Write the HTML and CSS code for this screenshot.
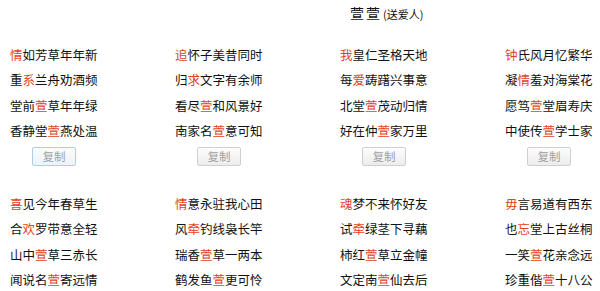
FILE: index.html
```html
<!DOCTYPE html>
<html lang="zh-CN">
<head>
<meta charset="utf-8">
<title>萱萱 藏头诗</title>
<link rel="stylesheet" href="styles.css">
</head>
<body>
<div class="page">
  <h1 class="title">萱萱<small>(送爱人)</small></h1>
  <div class="grid">
    <div class="poem">
      <p><em>情</em>如芳草年年新</p>
      <p>重<em>系</em>兰舟劝酒频</p>
      <p>堂前<em>萱</em>草年年绿</p>
      <p>香静堂<em>萱</em>燕处温</p>
      <button class="copy focused">复制</button>
    </div>
    <div class="poem">
      <p><em>追</em>怀子美昔同时</p>
      <p>归<em>求</em>文字有余师</p>
      <p>看尽<em>萱</em>和风景好</p>
      <p>南家名<em>萱</em>意可知</p>
      <button class="copy">复制</button>
    </div>
    <div class="poem">
      <p><em>我</em>皇仁圣格天地</p>
      <p>每<em>爱</em>踌躇兴事意</p>
      <p>北堂<em>萱</em>茂动归情</p>
      <p>好在仲<em>萱</em>家万里</p>
      <button class="copy">复制</button>
    </div>
    <div class="poem">
      <p><em>钟</em>氏风月忆繁华</p>
      <p>凝<em>情</em>羞对海棠花</p>
      <p>愿笃<em>萱</em>堂眉寿庆</p>
      <p>中使传<em>萱</em>学士家</p>
      <button class="copy">复制</button>
    </div>
    <div class="poem">
      <p><em>喜</em>见今年春草生</p>
      <p>合<em>欢</em>罗带意全轻</p>
      <p>山中<em>萱</em>草三赤长</p>
      <p>闻说名<em>萱</em>寄远情</p>
    </div>
    <div class="poem">
      <p><em>情</em>意永驻我心田</p>
      <p>风<em>牵</em>钓线袅长竿</p>
      <p>瑞香<em>萱</em>草一两本</p>
      <p>鹤发鱼<em>萱</em>更可怜</p>
    </div>
    <div class="poem">
      <p><em>魂</em>梦不来怀好友</p>
      <p>试<em>牵</em>绿茎下寻藕</p>
      <p>柿红<em>萱</em>草立金幢</p>
      <p>文定南<em>萱</em>仙去后</p>
    </div>
    <div class="poem">
      <p><em>毋</em>言易道有西东</p>
      <p>也<em>忘</em>堂上古丝桐</p>
      <p>一笑<em>萱</em>花亲念远</p>
      <p>珍重偕<em>萱</em>十八公</p>
    </div>
  </div>
</div>
</body>
</html>
```

FILE: styles.css
```css
html, body {
  margin: 0;
  padding: 0;
  background: #ffffff;
}
body {
  width: 600px;
  height: 291px;
  overflow: hidden;
  font-family: "Noto Sans CJK SC", "Noto Sans", sans-serif;
  color: #111;
}
.page {
  width: 600px;
}
.title {
  margin: 0;
  padding-left: 350px;
  height: 26px;
  line-height: 26px;
  font-size: 14px;
  font-weight: normal;
  letter-spacing: 2px;
  color: #111;
}
.title small {
  font-size: 11px;
  letter-spacing: 0;
  margin-left: 1px;
}
.grid {
  margin-top: 16px;
  padding-left: 10px;
  display: grid;
  grid-template-columns: repeat(4, 165px);
  row-gap: 25px;
}
.poem {
  width: 88px;
  display: flex;
  flex-direction: column;
  align-items: center;
}
.poem p {
  margin: 0;
  width: 88px;
  font-size: 12.5px;
  line-height: 25.3px;
  white-space: nowrap;
}
.poem em {
  font-style: normal;
  color: #e2421c;
}
.copy {
  margin-top: 4px;
  width: 44px;
  height: 19px;
  padding: 0;
  border: 1px solid #cfcfcf;
  border-radius: 2px;
  background: linear-gradient(#fdfdfd, #ececec);
  color: #a0a0a0;
  font-family: "Noto Sans CJK SC", sans-serif;
  font-size: 11.5px;
  line-height: 17px;
}
.copy.focused {
  border-color: #a9d0ea;
  background: linear-gradient(#fbfdfe, #eef3f6);
}
```
